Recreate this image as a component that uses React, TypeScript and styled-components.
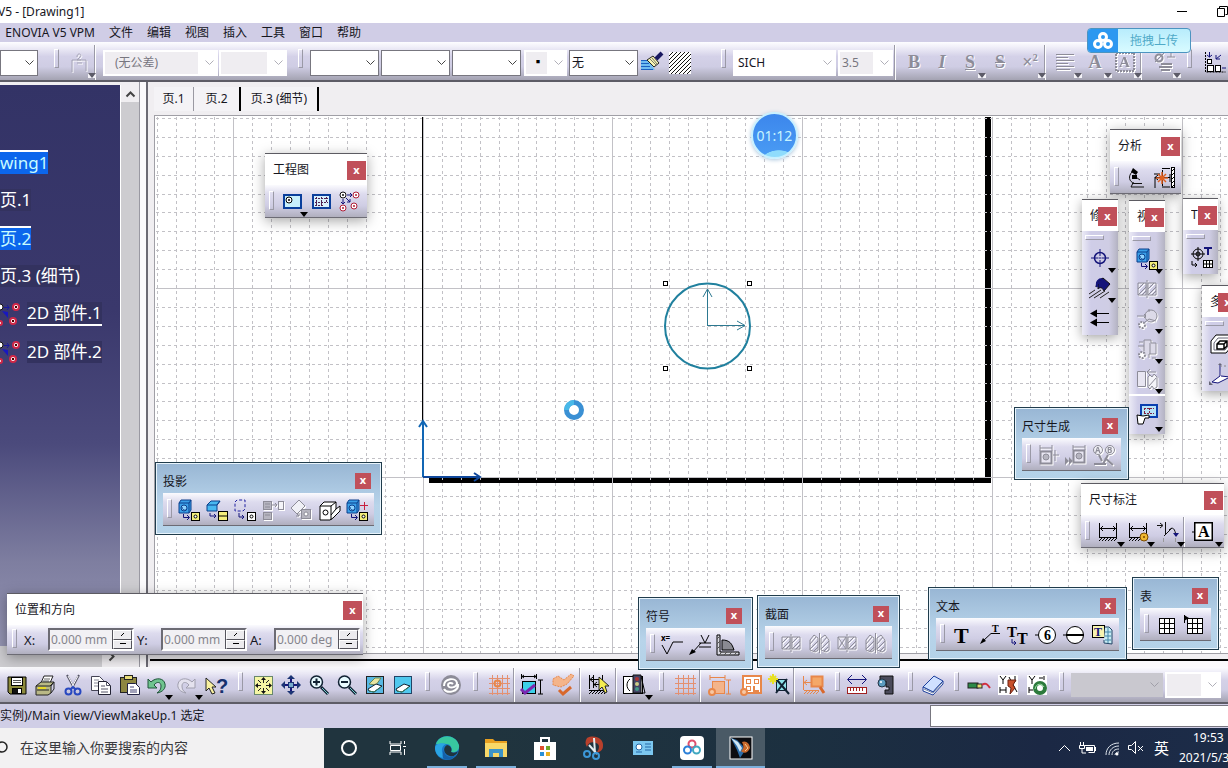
import React, { ReactNode } from "react";
import styled, { createGlobalStyle, css } from "styled-components";

const GlobalStyle = createGlobalStyle`
  * { box-sizing: border-box; }
  body {
    margin: 0;
    overflow: hidden;
    font-family: "Noto Sans", "Noto Sans CJK SC", sans-serif;
    font-size: 12px;
    line-height: 16px;
    color: #16161e;
  }
  button, input, select { font: inherit; color: inherit; }
`;

/* ---------- icon drawings ---------- */

const line = (d: string, stroke = "#000", width = 1, fill = "none") => (
  <path d={d} stroke={stroke} strokeWidth={width} fill={fill} />
);
const box = (x: number, y: number, w: number, h: number, fill = "#fff", stroke = "#000", sw = 1) => (
  <rect x={x} y={y} width={w} height={h} fill={fill} stroke={stroke} strokeWidth={sw} />
);
const ring = (x: number, y: number, color: string, fill = "#fff") => (
  <g>
    <circle cx={x} cy={y} r="3" fill={fill} stroke={color} />
    <circle cx={x} cy={y} r="1" fill={color} />
  </g>
);
const NAVY = "#14147a";
const GRAY = "#8d8c98";
const ORANGE = "#e8874a";

const blueCube = (
  <g>
    <path d="M1 4l2-3h10v10l-2 3H1z" fill="#3aa0e8" stroke="#0a3f8c" />
    <path d="M1 4h10v10M11 4l2-3" fill="none" stroke="#0a3f8c" />
    <circle cx="6" cy="9" r="3" fill="#8fd4ff" stroke="#0a3f8c" />
    <path d="M4 8a3 3 0 0 0 4 3" fill="none" stroke="#0a3f8c" />
  </g>
);
const yellowTarget = (
  <g>
    {line("M5.500 15v3.500H11M9 16l2.500 2.500L9 21", NAVY)}
    {box(13.5, 13.5, 8, 8, "#f4ee7c")}
    <circle cx="17.500" cy="17.500" r="1.500" fill="#fff" stroke="#000" />
  </g>
);
const hatchPair = (d: string) => (
  <g>
    {line("M2 5h8v12H2zM12 5h8v12h-8zM11 2v18", GRAY)}
    {line(d, GRAY)}
  </g>
);
const dim = (color: string) => (
  <g>{line("M2.500 2v14M19.500 2v14M3 7.500h16M6 5L3.500 7.500 6 10M16 5l2.500 2.500L16 10", color)}</g>
);
const hatchStrip = (color: string, w = 18) => (
  <g>
    {line(`M2 16.500h${w}`, color)}
    {Array.from({ length: Math.floor(w / 3) }, (_, i) => (
      <path key={i} d={`M${2 + i * 3} 20l3-3`} stroke={color} />
    ))}
  </g>
);
const gridLines = (color: string) =>
  line("M4.500 1v20M9.500 1v20M14.500 1v20M19.500 1v20M1 4.500h21M1 9.500h21M1 14.500h21M1 19.500h21", color);
const tablePic = (
  <g>
    {box(4.5, 4.5, 15, 15)}
    {line("M9.500 4v16M14.500 4v16M4 9.500h16M4 14.500h16")}
  </g>
);
const lens = (sign: string) => (
  <g>
    <path d="M13 13l7 7" stroke="#123" strokeWidth="3" />
    <path d="M14 14l6 6" stroke="#7cc" strokeWidth="1" />
    <circle cx="8.500" cy="8" r="6" fill="#e8fbff" stroke="#123" strokeWidth="1.500" />
    {line(sign, "#123", 2)}
  </g>
);
const eraser = (
  <g>
    <path d="M4 15l8-5 6 2-8 6-5-1z" fill="#fff" stroke="#123" />
    <path d="M5 17l5 1 7-5" fill="none" stroke="#3a8060" />
  </g>
);
const serif = (text: string, x: number, y: number, size: number, fill = "#000") => (
  <text x={x} y={y} fontFamily="Liberation Serif, serif" fontWeight="bold" fontSize={size} fill={fill}>
    {text}
  </text>
);

const ICONS: Record<string, ReactNode> = {
  save: (
    <g>
      <path d="M2 3h18v17H4l-2-2z" fill="#8c8a3c" stroke="#000" />
      {box(5.5, 3.5, 11, 8, "#fff")}
      {line("M7 6.500h8M7 8.500h8", "#555")}
      {box(6.5, 14.5, 9, 5, "#111")}
      <rect x="12" y="15" width="3" height="4" fill="#fff" />
    </g>
  ),
  print: (
    <g>
      <path d="M7 9l3-7h9l-3 7z" fill="#fff" stroke="#222" />
      {line("M10 5h6M9 7h6", "#666")}
      <path d="M2 12l5-4h13l-3 4v7l-3 2H2z" fill="#b9b886" stroke="#222" />
      {line("M2 12h14l4-4v7l-3 4M3 16h12", "#222")}
      <path d="M4 14h8" stroke="#e8d828" strokeWidth="2" />
    </g>
  ),
  cut: (
    <g>
      {line("M5 1l7 13M17 1l-7 13", "#556", 2)}
      {line("M6 2l6 11M16 2l-6 11", "#fff")}
      <circle cx="6.500" cy="17.500" r="3" fill="none" stroke="#2848c0" strokeWidth="2" />
      <circle cx="15.500" cy="17.500" r="3" fill="none" stroke="#2848c0" strokeWidth="2" />
      {line("M9 15l2-2 3 3", "#2848c0", 2)}
    </g>
  ),
  copy: (
    <g>
      <path d="M1.500 2.500h8l4 4v10h-12z" fill="#fff" stroke="#445" />
      {line("M4 6h5M4 9h6M4 12h6", "#889")}
      <path d="M8.500 7.500h8l4 4v9h-12z" fill="#fff" stroke="#223" />
      {line("M16.500 7.500v4h4M11 12h4M11 15h7M11 18h7", "#556")}
    </g>
  ),
  paste: (
    <g>
      {box(2.5, 3.5, 16, 15, "#8d8640", "#222")}
      {box(6.5, 1.5, 8, 4, "#e9dd7a", "#222")}
      <path d="M9.500 9.500h8l4 4v7h-12z" fill="#fff" stroke="#224" />
      {line("M12 13h4M12 16h7M12 18h7", "#447")}
    </g>
  ),
  undo: (
    <path d="M2 5v9h9l-3-3c3-4 7-3 7 1 0 3-1 5-4 7 6-1 9-5 8-9C18 4 10 3 5 8z" fill="#6fc48f" stroke="#20543a" />
  ),
  redo: (
    <path d="M20 5v9h-9l3-3c-3-4-7-3-7 1 0 3 1 5 4 7-6-1-9-5-8-9C4 4 12 3 17 8z" fill="#e4e2ee" stroke="#a09fae" />
  ),
  help: (
    <g>
      <path d="M1 4v13l3-3 3 6 3-1-3-6h4z" fill="#f8f0a0" stroke="#222" />
      <text x="11" y="19" fontFamily="Liberation Sans, sans-serif" fontWeight="bold" fontSize="20" fill="#16306e">
        ?
      </text>
    </g>
  ),
  fit: (
    <g>
      {box(2.5, 2.5, 18, 18, "#f6f6a4", "#68886c")}
      {line("M11.500 4v5M11.500 14v5M4 11.500h5M14 11.500h5M6 6l3 3M17 6l-3 3M6 17l3-3M17 17l-3-3", "#222")}
      <path d="M9 6l2.500-3L14 6zM9 17l2.500 3 2.500-3zM6 9l-3 2.500L6 14zM17 9l3 2.500L17 14z" fill="#111" />
    </g>
  ),
  pan: (
    <g>
      {line("M11 3v16M3 11h16", NAVY, 2)}
      <path d="M7 5l4-4 4 4zM7 17l4 4 4-4zM5 7l-4 4 4 4zM17 7l4 4-4 4z" fill="#1c3474" />
      {box(8.5, 8.5, 5, 5, "#7ac", "#1c3474")}
    </g>
  ),
  zoomin: lens("M5 8h7M8.500 4.500v7"),
  zoomout: lens("M5 8h7"),
  viewA: (
    <g>
      {box(2.5, 2.5, 17, 17, "#58b8e4", "#222")}
      <path d="M5 10l6-6h6l-5 7z" fill="#e8e6a0" stroke="#685" />
      {eraser}
    </g>
  ),
  viewB: (
    <g>
      {box(2.5, 2.5, 17, 17, "#50c8ee", "#246")}
      {eraser}
    </g>
  ),
  swirl: (
    <g>
      <circle cx="11" cy="11" r="10" fill={GRAY} />
      {line("M4 12c0-8 12-9 13-3 0 5-9 6-9 2 0-2 3-3 5-1M18 10c1 8-11 10-14 5", "#fff", 2)}
    </g>
  ),
  ogrid: (
    <g>
      {gridLines("#e49070")}
      <circle cx="9.500" cy="9.500" r="3" fill="none" stroke={ORANGE} strokeWidth="2" />
    </g>
  ),
  ogrid2: gridLines("#e49070"),
  dimcheck: (
    <g>
      {line("M2 2.500h14M1.500 0v5M16.500 0v5M20.500 6v14M18 6h5M18 20h5M4 1L2 2.500 4 4M14 1l2 1.500L14 4")}
      {box(2.5, 7.5, 13, 12, "#3cd0e8")}
      <path d="M1 15l4 4 10-8" fill="none" stroke="#7a28b0" strokeWidth="3" />
    </g>
  ),
  ocheck: (
    <g>
      <path d="M1 5l5-3 6 4 7-6 3 2-7 8-6 3-8-2z" fill="#f4b48a" stroke={ORANGE} strokeDasharray="2 1" />
      <path d="M7 16l4 4 8-7" fill="none" stroke="#d8682c" strokeWidth="3" />
    </g>
  ),
  dimcursor: (
    <g>
      {line("M2.500 1v14M6.500 1v13M15.500 1v5M3 5.500h11M6 10.500h8M6 3L3 5.500 6 8M10 8l-3 2.500L10 13")}
      {hatchStrip("#000")}
      <path d="M12 3v13l3-3 3 6 2-1-2-6h4z" fill="#f4ec50" stroke="#222" />
    </g>
  ),
  traffic: (
    <g>
      {box(0.5, 2.5, 19, 17)}
      {line("M7 5c-4 3-4 9 0 12M18 2l4 17h-4")}
      <path d="M10 1h8v18h-8z" fill="#446" stroke="#111" />
      <circle cx="14" cy="5" r="2" fill="#a33" />
      <circle cx="14" cy="10" r="2" fill="#cc8" />
      <circle cx="14" cy="15" r="2" fill="#498" />
    </g>
  ),
  odim: (
    <g>
      {box(4.5, 7.5, 12, 12, "#f4b48a", ORANGE)}
      {line("M2 3.500h15M2 1v5M17 1v5M20.500 6v14M18 6h5M18 20h5", ORANGE)}
      <circle cx="4" cy="18" r="3" fill="#f7c8a4" stroke={ORANGE} strokeWidth="2" />
    </g>
  ),
  owin: (
    <g>
      {box(3, 2, 18, 17, "#fff", ORANGE, 2)}
      {box(6.5, 5.5, 4, 4, "#fff", ORANGE)}
      {box(14.5, 5.5, 4, 4, "#fff", ORANGE)}
      {box(6.5, 12.5, 4, 4, "#fff", ORANGE)}
      {line("M14 12v5h5", ORANGE, 2)}
      <circle cx="4" cy="18" r="3" fill="#f7c8a4" stroke={ORANGE} strokeWidth="2" />
    </g>
  ),
  wand: (
    <g>
      {box(8.5, 5.5, 10, 11, "#8fe4ec", "#123")}
      {line("M9 6l12 14M19 5L8 19", "#123", 2)}
      <path d="M5 0v10M0 5h10M2 2l6 6M8 2L2 8" stroke="#e8e020" strokeWidth="2" />
    </g>
  ),
  odimzoom: (
    <g>
      {line("M1.500 2v14M2 8.500h14M5 6L2 8.500 5 11", ORANGE)}
      {box(9.5, 2.5, 11, 10, "#f4a868", ORANGE, 2)}
      {line("M18 13l4 6", "#d8682c", 3)}
      {hatchStrip(ORANGE, 15)}
    </g>
  ),
  ruler: (
    <g>
      {line("M2 5.500h18M6 1L1.500 5.500 6 10M16 1l4.500 4.500L16 10", NAVY)}
      {box(1.5, 13.5, 19, 6, "#fff", "#a02020")}
      {line("M4.500 14v3M7.500 14v3M10.500 14v3M13.500 14v3M16.500 14v3", "#a02020")}
    </g>
  ),
  caliper: (
    <g>
      <path d="M5 2h13v18h-8v-4h4v-3h-3V7H5z" fill="#4a4a5a" stroke="#111" />
      <circle cx="7" cy="9" r="4" fill="#5c9cc0" stroke="#234" />
      <circle cx="6" cy="8" r="1" fill="#fff" />
    </g>
  ),
  book: (
    <g>
      <path d="M1 13L12 2l9 5-10 11z" fill="#cfe0ff" stroke="#1c3f9c" />
      <path d="M1 13v4l10 4 10-11V7L11 18z" fill="#fff" stroke="#1c3f9c" />
      {line("M2 15l9 4L20 9", "#78a")}
    </g>
  ),
  plug: (
    <g>
      <rect x="0" y="9" width="10" height="5" fill="#2c8a48" stroke="#222" />
      <rect x="9" y="10" width="5" height="4" fill="#e4e070" stroke="#222" />
      {line("M14 11c4-3 6 0 8 3", "#d03040", 2)}
    </g>
  ),
  knowA: (
    <g>
      <rect x="1" y="1" width="20" height="20" fill="#fff" />
      {line("M3 2l3 4 3-4M6 6v4M3 19v-6M9 19v-6M3 16h6M12 3l8 15M18 2v6")}
      <path d="M11 6h8l-3 5 2 3-5 6 1-6-3-2z" fill="#c8502c" stroke="#6a2010" />
    </g>
  ),
  knowB: (
    <g>
      <rect x="1" y="1" width="20" height="20" fill="#fff" />
      {line("M3 2l3 4 3-4M6 6v4M13 4h4M3 19v-6M18 2v4M3 16h4")}
      <circle cx="14" cy="14" r="5" fill="none" stroke="#2c7a3c" strokeWidth="4" />
      {line("M9 15c1-6 7-6 9-2", "#9fe0a8", 1)}
    </g>
  ),
  frame: (
    <g>
      {box(3, 4, 17, 13, "#c8f0fc", "#0a3f9c", 2)}
      {ring(8, 9, "#000")}
    </g>
  ),
  sheet: (
    <g>
      {box(3, 4, 17, 13, "#d8f0fc", "#0a3f9c", 2)}
      <path d="M5 7.500h13M5 11.500h13M5 14.500h8M6.500 6v9M11.500 6v9M16.500 6v6" fill="none" stroke="#502050" strokeDasharray="2 1" />
    </g>
  ),
  detail: (
    <g>
      {ring(4, 4, "#111")}
      {ring(17, 4, "#b02038")}
      {ring(4, 17, "#b02038")}
      {ring(15, 15, "#b02038")}
      {line("M8 4h5M11 2l2 2-2 2M4 8v5M2 11l2 2 2-2M7 7l4 4M11 8v3H8", NAVY)}
    </g>
  ),
  treeDetail: (
    <g>
      <g stroke="#d02848" strokeWidth="2" fill="#fff">
        <circle cx="16" cy="4" r="3" />
        <circle cx="13" cy="18" r="3" />
        <circle cx="0" cy="20" r="2" />
      </g>
      {line("M15 4h2M12 18h2", "#400", 2)}
      <circle cx="0" cy="4" r="3" fill="#fff" stroke="#111" />
      {line("M4 4.500h5M7 2l2 2.500L7 7", "#1818a0")}
      <path d="M2 8l6 1v6z" fill="#1818c0" />
    </g>
  ),
  projview: (
    <g>
      {blueCube}
      {yellowTarget}
    </g>
  ),
  projplus: (
    <g>
      {blueCube}
      {yellowTarget}
      {line("M18.500 3v8M14 6.500h8", "#c82040")}
    </g>
  ),
  section: (
    <g>
      <path d="M1 6l4-4h9l-3 4v6H1z" fill="#48b8f0" stroke="#0a3f8c" />
      {line("M1 6h10l3-4", "#0a3f8c")}
      {line("M4 14v3h6M8 15l2 2-2 2", NAVY)}
      {box(12.5, 12.5, 9, 9, "#f4ee7c")}
      {line("M13 17h9")}
    </g>
  ),
  dashed: (
    <g>
      <path d="M1 3l2-2h8v9l-2 2H1z" fill="none" stroke="#2020a0" strokeDasharray="3 2" />
      {line("M5 14v4h5M8 16l2 2-2 2", NAVY)}
      {box(13.5, 13.5, 8, 8)}
      <circle cx="17.500" cy="17.500" r="1.500" fill="#fff" stroke="#000" />
    </g>
  ),
  grayProj: (
    <g>
      {box(1.5, 2.5, 8, 8, "#b6b5c0", GRAY)}
      {box(1.5, 13.5, 8, 7, "#b6b5c0", GRAY)}
      {box(16.5, 2.5, 5, 8, "#f4f4f8", GRAY)}
      {line("M10 6h5M13 4l2 2-2 2M3 5h5M3 8h5M3 16h5", GRAY)}
    </g>
  ),
  grayAux: (
    <g>
      <path d="M1 9l8-8 6 6-8 8z" fill="#f0f0f6" stroke={GRAY} />
      {line("M6 14l3 3M9 14v3H6", GRAY)}
      {box(11.5, 10.5, 9, 9, "#b6b5c0", GRAY)}
      <circle cx="16" cy="15" r="2" fill="#fff" stroke={GRAY} />
    </g>
  ),
  iso: (
    <g>
      <path d="M2 7l4-4h12v7l4-3v5l-7 7-3 2H2z" fill="#fff" stroke="#000" />
      {line("M2 7h11v14M13 7l5-4M18 10l-5 6")}
      <circle cx="7.500" cy="13.500" r="2.500" fill="#fff" stroke="#000" />
    </g>
  ),
  scope: (
    <g>
      <path d="M8 1l5 4-2 3-5-3z" fill="#000" />
      {line("M7 5c-4 4-3 10 2 11M8 8l7 5M7 16.500h10M8 16l-2 4h13", "#111")}
      {box(7.5, 8.5, 4, 3, "#000")}
    </g>
  ),
  analysis: (
    <g>
      {line("M1 7h6M3 10.500h14M5 8l-3 2.500L5 13M2 10v11M9.500 3v16M9 1.500h8M9 20h8M17 7v8")}
      <path d="M9 5v12M3 11h12M5 7l8 8M13 7l-8 8" stroke="#e06020" strokeWidth="1.500" />
      {box(18.5, 0.5, 3, 20)}
      {line("M18 5l4-4M18 9l4-4M18 13l4-4M18 17l4-4M18 21l4-4")}
    </g>
  ),
  target: (
    <g>
      <circle cx="11" cy="11" r="5.500" fill="none" stroke={NAVY} strokeWidth="1.500" />
      {line("M11 2v7M11 13v7M2 11h7M13 11h7M9.500 11h3", NAVY)}
    </g>
  ),
  bucket: (
    <g>
      <path d="M8 5l6-4 7 6-6 7c-2-4-4-4-6-2v-5l-2 3z" fill="#14147a" stroke="#111" />
      {line("M8 10c-1-6 2-8 5-8", NAVY, 2)}
      {line("M0 17l6-4M0 21l12-8M5 21l11-7M11 21l9-6", "#222")}
    </g>
  ),
  arrows: (
    <g>
      {line("M3 6.500h17M3 15.500h17")}
      <path d="M1 6.500l7-4v8zM1 15.500l7-4v8z" fill="#000" />
    </g>
  ),
  hatchA: hatchPair("M2 11l6-6M2 17L10 9M6 17l4-4M12 11l6-6M12 17l8-8M16 17l4-4"),
  hatchB: (
    <g>
      {line("M2 18V8l4-5 4 3v12l-3 2zM13 18V6l4-3 4 5v10l-3 2zM11.500 1v20", GRAY)}
      {line("M2 12l6-7M2 17l8-8M6 19l4-4M13 12l6-7M13 17l8-8M16 19l4-4", GRAY)}
    </g>
  ),
  hatchC: hatchPair("M2 5l8 12M10 5L2 17M12 11l6-6M12 17l8-8M16 17l4-4"),
  grayGlass: (
    <g>
      <circle cx="15" cy="8" r="6" fill="#dcdae8" stroke={GRAY} />
      {line("M1 8h9M8 6l2 2-2 2M13 1v3M9 14l4-3 7 2", GRAY)}
      <circle cx="6" cy="17" r="3" fill="#fff" stroke={GRAY} strokeWidth="2" strokeDasharray="2 1" />
    </g>
  ),
  grayBreak: (
    <g>
      <path d="M2 8h6V2h7v3h5v11h-7v4" fill="#dcdae8" stroke={GRAY} />
      {line("M8 8v5M14 5v11M3 4h4M16 20h4", GRAY)}
      <circle cx="6" cy="17" r="3" fill="#fff" stroke={GRAY} strokeWidth="2" strokeDasharray="2 1" />
    </g>
  ),
  grayCut: (
    <g>
      <path d="M1.500 3.500h8v15h-8z" fill="#e8e6f2" stroke={GRAY} />
      <path d="M12 9l2-2 2 2 2-3 3 3v10l-3 2-2-3-2 3-2-2z" fill="#f4f4f8" stroke={GRAY} />
      {line("M12 4h8M14 1l-3 3 3 3M13 18l7-8", GRAY)}
    </g>
  ),
  handSheet: (
    <g>
      {box(5, 2, 16, 12, "#b8e4f8", "#0a3fb0", 2)}
      <path d="M8 5.500h10M8 10.500h10M8.500 5v6M13.500 5v6" stroke="#802040" strokeDasharray="2 1" />
      <path d="M1 12l6 1 6-1v3h-4l-1 3-1 3H2z" fill="#fff" stroke="#000" />
    </g>
  ),
  textTarget: (
    <g>
      <circle cx="8" cy="8" r="5" fill="none" stroke="#000" />
      <circle cx="8" cy="8" r="2" fill="none" stroke="#000" />
      {line("M8 1v14M1 8h14M2 15v4h5M5 17l2 2-2 2")}
      {line("M14 2h8M18 2v7", NAVY, 2)}
      {box(13.5, 14.5, 9, 7)}
      {line("M16.500 14v8M19.500 14v8M13 18h10")}
    </g>
  ),
  nested: (
    <g>
      <path d="M2 8l5-6h15v12l-5 6H2z" fill="#fff" stroke="#000" />
      <path d="M5 10l4-5h11v7l-4 5H5z" fill="none" stroke="#667" />
      <path d="M8 11l3-3h7v5l-3 3H8zM8 11h7v5M15 11l3-3" fill="#fff" stroke="#000" strokeWidth="1.500" />
    </g>
  ),
  axes: (
    <g>
      <path d="M11 2v11l-8 6 6 1 12-6-9-1" fill="#fff" stroke={NAVY} />
      <path d="M11 3h9v9" fill="none" stroke="#888" strokeDasharray="2 2" />
      <path d="M0 18l4 4H0zM9 2l2-2 2 2z" fill="#667" />
    </g>
  ),
  grayDimA: (
    <g>
      {line("M3 4h12M3 1v6M15 1v6M18 6v11M16 11h6", GRAY)}
      {box(3.5, 7.5, 11, 12, "#e8e6f2", GRAY, 2)}
      <circle cx="9" cy="13" r="3" fill="#b6b5c0" stroke={GRAY} />
    </g>
  ),
  grayDimB: (
    <g>
      {line("M8 3h12M8 1v5M20 1v5", GRAY)}
      {box(8.5, 6.5, 11, 12, "#e8e6f2", GRAY, 2)}
      <circle cx="14" cy="12" r="3" fill="#b6b5c0" stroke={GRAY} />
      <path d="M0 13l4 4-4 4zM4 13l4 4-4 4z" fill={GRAY} />
    </g>
  ),
  grayAB: (
    <g>
      <circle cx="5" cy="6" r="4.500" fill="#f0f0f6" stroke={GRAY} />
      <circle cx="17" cy="6" r="4.500" fill="#f0f0f6" stroke={GRAY} />
      <text x="2" y="9" fontSize="8" fill={GRAY} fontWeight="bold">A</text>
      <text x="14" y="9" fontSize="8" fill={GRAY} fontWeight="bold">B</text>
      {line("M6 11l3 6M15 11l-5 9M12 14l8 7", GRAY, 2)}
      {line("M1 20h12", GRAY, 2)}
    </g>
  ),
  dimension: (
    <g>
      {dim("#000")}
      {hatchStrip("#000")}
    </g>
  ),
  dimensionGear: (
    <g>
      {dim("#000")}
      {hatchStrip("#000", 12)}
      <circle cx="17" cy="16" r="4" fill="#f0b830" stroke="#7a4a00" />
      <circle cx="17" cy="16" r="1" fill="#7a4a00" />
    </g>
  ),
  dimensionCurve: (
    <g>
      {line("M0 4.500h5M3 2l3 2.500L3 7M8.500 1v12M7 15l8-8M12 9c4-4 6-1 7 6", "#111")}
      <path d="M16 12h6l-3 4z" fill={NAVY} />
      {line("M6.500 17v4M18.500 17v4", "#999")}
    </g>
  ),
  datum: (
    <g>
      {box(3, 2, 17, 17, "#fff", "#000", 1)}
      {box(2.5, 1.5, 18, 18, "none")}
      {serif("A", 6, 16, 16)}
      {line("M0 11h2")}
    </g>
  ),
  roughness: (
    <g>
      {line("M1 11l5 9 6-12h10")}
      <text x="0" y="7" fontSize="8" fontWeight="bold">x=</text>
    </g>
  ),
  weld: (
    <g>
      {line("M10 9h12M10 13h12M12 1l4 8 4-8M12 9L3 19")}
      <path d="M0 21l3-6 4 3z" fill="#000" />
    </g>
  ),
  areaFill: (
    <g>
      <path d="M3 1v17h19v3H0V1z" fill="#d8d8e0" stroke="#000" />
      {line("M0 5l3-3M0 10l3-3M0 15l3-3M2 21l3-3M7 21l3-3M12 21l3-3M17 21l3-3", "#555")}
      <path d="M5 16V6c8 0 10 4 12 10z" fill="#8a8a92" stroke="#000" />
    </g>
  ),
  textT: serif("T", 3, 19, 22),
  textLeader: (
    <g>
      {serif("T", 13, 8, 10)}
      {line("M21 9.500h-9L4 17")}
      <path d="M1 20l3-6 3 3z" fill="#000" />
    </g>
  ),
  textReplicate: (
    <g>
      {serif("T", 0, 13, 15)}
      {serif("T", 10, 20, 16)}
      {line("M5 15v4h4M7 17l2 2-2 2", NAVY)}
    </g>
  ),
  balloon: (
    <g>
      <circle cx="12" cy="11" r="8.500" fill="#fff" stroke="#000" />
      {serif("6", 9, 16, 14)}
      {line("M0 11h3")}
    </g>
  ),
  datumTarget: (
    <g>
      <circle cx="12" cy="11" r="8.500" fill="#fff" stroke="#000" />
      {line("M3 11h18", "#000", 2)}
      {line("M0 11h3")}
    </g>
  ),
  textLink: (
    <g>
      {box(1.5, 1.5, 12, 12, "#f8f4b0")}
      {serif("T", 3, 12, 12, NAVY)}
      <path d="M14 3h4l3 3v14l-8-1v-3" fill="#c8ecf4" stroke="#246" />
      {line("M14 8h6M14 12h6M14 16h6M17 4v15", "#48a")}
    </g>
  ),
  table: tablePic,
  tableCsv: (
    <g>
      {tablePic}
      <path d="M1 1l5 3-5 3z" fill="#000" />
      {line("M1.500 1v8")}
    </g>
  ),
  grayTolerance: (
    <g>
      {line("M3 20V8h14v11M8 11h5", "#a4a3b4")}
      {line("M8 5c0-5 6-3 3 0l-3 3h4", "#a4a3b4")}
    </g>
  ),
  brush: (
    <g>
      <path d="M0 9h8l6 9H0z" fill="#70bcf0" />
      {line("M0 8.500h9M0 11.500h8M0 14.500h9M0 17.500h12", "#1c60c0")}
      <path d="M6 8l6-4 6 7-5 4z" fill="#f8f4b4" stroke="#222" />
      {line("M9 7l6 6M11 6l5 6", "#776")}
      {line("M15 7l6-6", "#181860", 4)}
    </g>
  ),
  hatchTile: (
    <g>
      <rect width="22" height="22" fill="#fff" />
      {line("M0 4l4-4M0 8l8-8M0 12L12 0M0 16L16 0M0 20L20 0M2 22L22 2M6 22L22 6M10 22l12-12M14 22l8-8M18 22l4-4", "#111")}
    </g>
  ),
  grayAlign: line("M1 2.500h18M1 5.500h12M1 8.500h18M1 11.500h12M1 14.500h18M1 17.500h14", GRAY),
  grayFrame: (
    <g>
      <rect x="2" y="1" width="18" height="18" fill="none" stroke={GRAY} strokeWidth="2" strokeDasharray="2 1" />
      {serif("A", 5, 15, 15, GRAY)}
    </g>
  ),
  graySymbol: (
    <g>
      <circle cx="5" cy="6" r="3.500" fill="none" stroke={GRAY} strokeWidth="2" />
      {line("M1 10l9-9M13 5h8M17 1v4", GRAY)}
      {line("M7 12h11M5 15h13M7 18h9", GRAY, 2)}
    </g>
  ),
  snapGrid: (
    <g>
      <path d="M1.500 0v20h20" fill="none" stroke="#000" strokeDasharray="2 1" />
      {box(3.5, 7.5, 4, 4)}
      {box(3.5, 13.5, 6, 6)}
      {box(11.5, 13.5, 5, 6)}
      {line("M5.500 0v5M3 3l2.500 2L8 3M17 3l-5 4M12 3v4h4M22 16h-4", NAVY)}
    </g>
  ),
};

/* ---------- shared parts ---------- */

const Shell = styled.div`
  position: relative;
  display: flex;
  flex-direction: column;
  height: 100vh;
  overflow: hidden;
  background: #f0eef1;
`;

const Drawing = styled.svg<{ $embossed?: boolean }>`
  display: block;
  flex: none;
  overflow: visible;
  filter: ${(p) => (p.$embossed ? "drop-shadow(1px 1px 0 #fff)" : "none")};
`;

const Icon = ({ name }: { name: string }) => (
  <Drawing width="22" height="22" viewBox="0 0 22 22" aria-hidden="true" $embossed={/^(gray|hatch[ABC])/.test(name)}>
    {ICONS[name]}
  </Drawing>
);

const ToolButton = styled.button<{ $w?: number; $gray?: boolean; $h?: number }>`
  position: relative;
  display: flex;
  align-items: center;
  justify-content: center;
  flex: none;
  width: ${(p) => p.$w ?? 28}px;
  height: ${(p) => p.$h ?? 30}px;
  padding: 0;
  border: 0;
  background: none;
  ${(p) => p.$gray && css`
    color: #8d8c98;
    text-shadow: 1px 1px 0 #fff;
    font: bold 18px "Liberation Serif", serif;
  `}
`;

const Caret = styled.i<{ $boxed?: boolean }>`
  position: absolute;
  right: -2px;
  bottom: 0;
  border: 4px solid transparent;
  border-top: 5px solid #000;
  border-bottom: 0;
  ${(p) => p.$boxed && css`border-color: #5c5b68 #f4f3f8 #f4f3f8;`}
`;

const Grip = styled.span<{ $w?: number; $across?: boolean }>`
  flex: none;
  display: flex;
  justify-content: center;
  align-self: flex-start;
  width: ${(p) => p.$w ?? 20}px;
  padding: 4px 0 ${(p) => (p.$across ? 3 : 0)}px;
  &::before {
    content: "";
    width: ${(p) => (p.$across ? 17 : 3)}px;
    height: ${(p) => (p.$across ? 3 : 17)}px;
    border: 1px solid #fff;
    border-right-color: #9a99a6;
    border-bottom-color: #9a99a6;
  }
`;

const Divider = styled.span<{ $across?: boolean }>`
  flex: none;
  align-self: stretch;
  width: ${(p) => (p.$across ? "auto" : "2px")};
  height: ${(p) => (p.$across ? "2px" : "auto")};
  background: #fff;
  border-left: ${(p) => (p.$across ? "0" : "1px solid #9a99a6")};
`;

type ToolSpec = string | { icon: string; w?: number; caret?: boolean; h?: number } | { grip: number };

const Tool = ({ spec, w }: { spec: ToolSpec; w?: number }) => {
  if (spec === "|") return <Divider />;
  if (spec === "-") return <Divider $across />;
  if (typeof spec === "object" && "grip" in spec) return <Grip $w={spec.grip} />;
  const s = typeof spec === "string" ? { icon: spec } : spec;
  return (
    <ToolButton type="button" aria-label={s.icon} $w={("w" in s && s.w) || w} $h={"h" in s ? s.h : undefined}>
      <Icon name={s.icon} />
      {"caret" in s && s.caret && <Caret />}
    </ToolButton>
  );
};

/* ---------- title and menu ---------- */

const TitleBar = styled.header`
  display: flex;
  align-items: center;
  flex: none;
  height: 23px;
  background: #fff;
  white-space: nowrap;
`;
const TitleText = styled.span`
  margin-left: -2px;
`;
const WindowButtons = styled.div`
  display: flex;
  margin-left: auto;
`;
const WindowButton = styled.button<{ $w: number }>`
  display: flex;
  align-items: center;
  padding: 0 0 0 18px;
  width: ${(p) => p.$w}px;
  height: 22px;
  border: 0;
  background: none;
  overflow: hidden;
`;
const MenuBar = styled.nav`
  display: flex;
  align-items: center;
  flex: none;
  gap: 14px;
  height: 19px;
  background: #d0cde6;
`;
const MenuButton = styled.button<{ $lead?: boolean }>`
  flex: none;
  width: ${(p) => (p.$lead ? "95px" : "auto")};
  padding: 0;
  border: 0;
  background: none;
  white-space: nowrap;
  text-align: right;
`;
const UploadPill = styled.button`
  position: absolute;
  z-index: 5;
  top: 28px;
  right: 37px;
  display: flex;
  align-items: center;
  width: 104px;
  height: 25px;
  padding: 0;
  border: 1px solid #4c94c0;
  border-radius: 4px;
  background: linear-gradient(#b8ecfc, #d8fbff);
  color: #50aac8;
  overflow: hidden;
`;
const PillLogo = styled.span`
  display: flex;
  align-items: center;
  justify-content: center;
  width: 30px;
  height: 100%;
  margin-right: 12px;
  background: #2c98f0;
`;
const CloudRings = () => (
  <Drawing width="20" height="20" viewBox="0 0 20 20">
    <g fill="none" strokeWidth="3" stroke="#fff">
      <circle cx="10" cy="6" r="3.500" />
      <circle cx="5" cy="13" r="3.500" />
      <circle cx="15" cy="13" r="3.500" />
    </g>
  </Drawing>
);

/* ---------- toolbars ---------- */

const ToolStrip = styled.div<{ $h: number; $pad?: number }>`
  display: flex;
  align-items: center;
  flex: none;
  height: ${(p) => p.$h}px;
  padding-top: ${(p) => p.$pad ?? 0}px;
  overflow: hidden;
  background: linear-gradient(#fdfdff 0, #f1f0f9 12%, #d4d1e8 38%, #cfcde4 65%, #a4a3b2 100%);
  border-bottom: 2px solid #5d5c66;
`;
const ComboBox = styled.span<{ $w: number; $ml?: number }>`
  display: grid;
  align-items: center;
  flex: none;
  width: ${(p) => p.$w}px;
  height: 26px;
  margin-left: ${(p) => p.$ml ?? 2}px;
  & > * { grid-area: 1 / 1; }
  & > svg { justify-self: end; margin-right: 4px; pointer-events: none; }
`;
const ComboSelect = styled.select<{ $muted?: boolean; $flat?: boolean; $pad?: number }>`
  appearance: none;
  width: 100%;
  height: 100%;
  padding: 0 ${(p) => p.$pad ?? 2}px;
  border: 1px solid #77767f;
  border-radius: 0;
  background: #fff;
  opacity: 1;
  ${(p) => p.$muted && css`
    border: 2px solid #fff;
    background: linear-gradient(#efedf1, #efedf1) left / calc(100% - 18px) 100% no-repeat #fff;
    color: #77767f;
  `}
  ${(p) => p.$flat && css`
    border-color: #fff;
  `}
`;
type ComboProps = { w: number; ml?: number; pad?: number; label: string; value?: string; muted?: boolean; flat?: boolean };
const Combo = ({ w, ml, pad, label, value = "", muted, flat }: ComboProps) => (
  <ComboBox $w={w} $ml={ml}>
    <ComboSelect aria-label={label} $muted={muted} $flat={flat} $pad={pad} disabled={muted} defaultValue={value}>
      <option>{value}</option>
    </ComboSelect>
    <Drawing width="9" height="6" viewBox="0 0 9 6">
      {line("M0.500 0.500l4 4 4-4", muted || flat ? "#b0afb8" : "#444")}
    </Drawing>
  </ComboBox>
);
const PointSelect = styled(ComboSelect)`
  color: #000;
`;
const GrayCombo = styled.select`
  appearance: none;
  width: 100%;
  height: 24px;
  border: 0;
  border-radius: 0;
  background: #c9c8cf;
  opacity: 1;
`;
const Space = styled.span<{ $w: number }>`
  flex: none;
  width: ${(p) => p.$w}px;
`;
const Emphasis = styled.span<{ $kind: "i" | "u" | "s" | "n" }>`
  font-style: ${(p) => (p.$kind === "i" ? "italic" : "normal")};
  text-decoration: ${(p) => (p.$kind === "u" ? "underline" : p.$kind === "s" ? "line-through" : "none")};
`;
const Power = styled.sup`
  font-size: 10px;
  margin-top: -10px;
`;

/* ---------- main area ---------- */

const Main = styled.main`
  display: flex;
  flex: 1;
  min-height: 0;
`;
const TreePane = styled.aside`
  display: grid;
  grid-template: 1fr 21px / 121px 18px;
  flex: none;
  width: 140px;
  padding-top: 3px;
  border-right: 1px solid #9a99a2;
`;
const Tree = styled.ul`
  margin: 0;
  padding: 58px 0 0;
  list-style: none;
  overflow: hidden;
  border-right: 1px solid #fff;
  background: linear-gradient(#333366 0, #3a386c 40%, #4b4a7c 64%, #7e7ea0 85%, #9494b2 100%);
`;
const TreeRow = styled.li`
  display: flex;
  align-items: center;
  gap: 5px;
  height: 38px;
  font-size: 17px;
  line-height: 22px;
  color: #fff;
  white-space: nowrap;
`;
const TreeLabel = styled.span<{ $on?: boolean; $line?: boolean }>`
  background: ${(p) => (p.$on ? "#0c66ec" : "#33325f")};
  color: ${(p) => (p.$on ? "#c8fbff" : "#fff")};
  border-top: ${(p) => (p.$on ? "2px solid #fff" : "0")};
  border-bottom: ${(p) => (p.$line ? "2px solid #fff" : "0")};
`;
const ScrollTrack = styled.div`
  display: flex;
  justify-content: center;
  background: linear-gradient(#f0eef1 17px, #cdccd0 17px);
  padding-top: 6px;
`;
const ScrollBottom = styled.div`
  grid-column: 1 / 3;
  display: flex;
  align-items: center;
  justify-content: flex-end;
  padding-right: 24px;
  background: linear-gradient(90deg, #cdccd0 102px, #f0eef1 102px);
`;
const Splitter = styled.div`
  flex: none;
  width: 8px;
  background: #fbfafc;
  border-right: 2px solid #6c6b74;
`;
const Work = styled.section`
  display: flex;
  flex: 1;
  flex-direction: column;
  min-width: 0;
  padding-left: 6px;
`;
const Tabs = styled.div`
  display: flex;
  align-items: center;
  flex: none;
  height: 33px;
`;
const Tab = styled.button<{ $w: number; $dark?: boolean }>`
  width: ${(p) => p.$w}px;
  height: 24px;
  padding: 0;
  border: 0;
  border-right: ${(p) => (p.$dark ? "2px solid #000" : "1px solid #9a99a2")};
  background: #f4f3f6;
  white-space: nowrap;
`;
const Sheet = styled.div`
  flex: 1;
  min-height: 0;
  border: 1px solid #a09fa6;
  border-right: 0;
  background: #fff;
  overflow: hidden;
`;
const SheetFoot = styled.div`
  flex: none;
  height: 13px;
  margin-left: -4px;
  background: linear-gradient(#f0eef1 5px, #000 5px, #000 7px, #fbfafc 7px);
`;

const steps = (from: number, n: number, size: number) =>
  Array.from({ length: n }, (_, i) => ({ at: Math.round(from + i * size), major: i % 10 === 0 }));

const SheetDrawing = () => {
  const columns = steps(-112, 82, 18.98);
  const rows = steps(-17, 40, 18.9);
  return (
    <Drawing width="100%" height="100%">
      <g>
        <rect x="830" y="1" width="6" height="365" fill="#000" />
        <rect x="274" y="361" width="562" height="6" fill="#000" />
      </g>
      <g stroke="#c2c1c6" shapeRendering="crispEdges">
        {columns.map((c) => (
          <line key={c.at} x1={c.at + 0.5} x2={c.at + 0.5} y1="1" y2="100%" strokeDasharray={c.major ? undefined : "3 3"} />
        ))}
        {rows.map((r) => (
          <line key={r.at} y1={r.at + 0.5} y2={r.at + 0.5} x1="1" x2="100%" strokeDasharray={r.major ? undefined : "3 3"} />
        ))}
      </g>
      <g>
        <path d="M267.500 1v304" stroke="#000" />
        <g fill="none" stroke="#1166b4" strokeWidth="2">
          <path d="M268 361V306M264 311l4-6 4 6" />
          <path d="M268 361h56M319 357l6 4-6 4" stroke="#10489c" />
        </g>
        <circle cx="552.500" cy="210" r="42.500" fill="none" stroke="#20809e" strokeWidth="2" />
        <path d="M552.500 210V173M548 181l4.500-8 4.500 8M552 209.500h38M582 205l8 4.500-8 4.500" fill="none" stroke="#2c7890" />
        {[[508, 165], [592, 165], [508, 250], [592, 250]].map(([x, y]) => (
          <rect key={`${x}-${y}`} x={x + 0.5} y={y + 0.5} width="4" height="4" fill="#fff" stroke="#000" />
        ))}
        <circle cx="419" cy="294" r="7.500" fill="#fff" stroke="#3a90d4" strokeWidth="5" />
        <path d="M411.500 294a7.500 7.500 0 0 1 7.500-7.500" fill="none" stroke="#48b8e8" strokeWidth="5" />
      </g>
    </Drawing>
  );
};

const Timer = styled.div`
  position: absolute;
  z-index: 4;
  left: 751px;
  top: 112px;
  display: grid;
  place-items: center;
  width: 47px;
  height: 47px;
  border: 2px solid #c8f0ff;
  border-radius: 50%;
  background: radial-gradient(circle at 60% 140%, #8fdcfc 36%, transparent 37%), linear-gradient(#3c86ec, #4a9cf4);
  box-shadow: 0 1px 4px #a8c4dc;
  color: #c8f4ff;
  font-size: 14px;
`;

/* ---------- floating tool windows ---------- */

const Float = styled.section<{ $x: number; $y: number; $w: number; $glass?: boolean }>`
  position: absolute;
  z-index: 3;
  left: ${(p) => p.$x}px;
  top: ${(p) => p.$y}px;
  width: ${(p) => p.$w}px;
  border-top: 1px solid #5c5b62;
  background: #fff;
  box-shadow: 0 3px 12px rgba(0, 0, 0, 0.35);
  ${(p) => p.$glass && css`
    padding: 0 7px 8px;
    border: 1px solid #203c4c;
    background: linear-gradient(#98b6d4, #b8d4ea 60%, #b4d2e8);
    box-shadow: inset 0 0 0 1px #e8f4fc;
  `}
`;
const FloatHead = styled.header<{ $glass?: boolean }>`
  display: flex;
  align-items: center;
  height: ${(p) => (p.$glass ? 30 : 31)}px;
  padding: ${(p) => (p.$glass ? "5px 3px 0 0" : "2px 1px 0 8px")};
`;
const FloatTitle = styled.h2<{ $glass?: boolean }>`
  flex: 1;
  min-width: 0;
  margin: ${(p) => (p.$glass ? "2px 0 0" : "0 0 2px")};
  overflow: hidden;
  font-size: 12px;
  font-weight: 400;
  white-space: nowrap;
`;
const CloseButton = styled.button<{ $glass?: boolean }>`
  flex: none;
  width: ${(p) => (p.$glass ? 16 : 19)}px;
  height: ${(p) => (p.$glass ? 16 : 19)}px;
  padding: 0 0 2px;
  border: 0;
  background: #c0505a;
  color: #fff;
  font-size: 11px;
  font-weight: 700;
  line-height: 14px;
`;
const FloatBody = styled.div<{ $column?: boolean; $low?: boolean }>`
  display: flex;
  flex-direction: ${(p) => (p.$column ? "column" : "row")};
  align-items: center;
  min-height: ${(p) => (p.$low ? 30 : 33)}px;
  padding: ${(p) => (p.$column ? "0 0 2px" : p.$low ? "0" : "2px 0 0")};
  background: ${(p) =>
    p.$column
      ? "linear-gradient(90deg, #ecebf6, #cfcde8 25%, #cfcde4 75%, #b4b3c2)"
      : "linear-gradient(#fbfbfe, #dddbee 28%, #cfcde4 65%, #b0afbe)"};
  border-bottom: ${(p) => (p.$column ? "0" : "1px solid #6c6b74")};
`;

type FloatProps = {
  x: number;
  y: number;
  w: number;
  title: string;
  glass?: boolean;
  column?: boolean;
  low?: boolean;
  toolW?: number;
  tools?: ToolSpec[];
  children?: ReactNode;
};
const FloatWindow = ({ x, y, w, title, glass, column, low, toolW, tools = [], children }: FloatProps) => (
  <Float $x={x} $y={y} $w={w} $glass={glass}>
    <FloatHead $glass={glass}>
      <FloatTitle $glass={glass}>{title}</FloatTitle>
      <CloseButton $glass={glass} type="button" aria-label={`关闭 ${title}`}>x</CloseButton>
    </FloatHead>
    <FloatBody $column={column} $low={low}>
      <Grip $w={column ? 24 : low ? 14 : 12} $across={column} />
      {tools.map((t, i) => <Tool key={i} spec={t} w={toolW} />)}
      {children}
    </FloatBody>
  </Float>
);

const Field = styled.label`
  display: flex;
  align-items: center;
  font-size: 13px;
`;
const FieldName = styled.span`
  width: 27px;
  padding-left: 3px;
`;
const NumberBox = styled.span`
  display: flex;
  width: 86px;
  height: 23px;
  border: 2px solid #6c6b74;
  border-right-color: #fff;
  border-bottom-color: #fff;
  background: #f2f1f4;
`;
const NumberInput = styled.input`
  flex: 1;
  width: 0;
  padding: 0 1px;
  border: 0;
  background: none;
  color: #85848c;
  font-size: 12px;
`;
const Spinner = styled.span`
  display: grid;
  width: 20px;
  border-left: 1px solid #55545c;
`;
const SpinButton = styled.button`
  display: grid;
  place-items: center;
  padding: 0;
  border: 1px solid #fff;
  border-right-color: #55545c;
  border-bottom-color: #55545c;
  background: #ecebee;
`;
const Coordinate = ({ name, unit }: { name: string; unit: string }) => (
  <Field>
    <FieldName>{name}:</FieldName>
    <NumberBox>
      <NumberInput defaultValue={`0.000 ${unit}`} />
      <Spinner>
        <SpinButton type="button" aria-label={`${name} +`}>
          <Drawing width="6" height="4" viewBox="0 0 6 4">{line("M1 3l3-3")}</Drawing>
        </SpinButton>
        <SpinButton type="button" aria-label={`${name} -`}>
          <Drawing width="6" height="4" viewBox="0 0 6 4">{line("M0 1.500h6")}</Drawing>
        </SpinButton>
      </Spinner>
    </NumberBox>
  </Field>
);

/* ---------- status and taskbar ---------- */

const StatusBar = styled.footer`
  display: flex;
  flex: none;
  justify-content: space-between;
  height: 24px;
  background: #d0cee6;
`;
const StatusText = styled.span`
  padding-top: 4px;
  white-space: nowrap;
`;
const CommandInput = styled.input`
  width: 298px;
  height: 22px;
  margin-top: 1px;
  border: 1px solid #77767f;
  border-right: 0;
  border-radius: 0;
  background: #fff;
`;
const Taskbar = styled.footer`
  display: flex;
  flex: none;
  height: 40px;
  overflow: hidden;
  background: linear-gradient(90deg, #20343e 40%, #1c3040 65%, #1b2844 85%, #1c2c48);
`;
const SearchBox = styled.label`
  display: flex;
  align-items: center;
  flex: none;
  gap: 12px;
  width: 324px;
  background: #f2f1f2;
`;
const SearchInput = styled.input`
  flex: 1;
  padding: 0;
  border: 0;
  background: none;
  font-size: 14px;
  &::placeholder { color: #3a3a3e; opacity: 1; }
`;
const TaskItem = styled.button<{ $open?: boolean; $active?: boolean }>`
  display: flex;
  align-items: center;
  justify-content: center;
  flex: none;
  width: 49px;
  padding: 0;
  border: 0;
  background: ${(p) =>
    p.$open
      ? `linear-gradient(#7cb0dc, #7cb0dc) bottom / ${p.$active ? "100%" : "40px"} 2px no-repeat ${p.$active ? "#4a5a66" : "transparent"}`
      : "none"};
`;
const Tray = styled.div`
  display: flex;
  align-items: center;
  gap: 8px;
  margin-left: auto;
  color: #fff;
`;
const Language = styled.span`
  margin-left: 2px;
  font-size: 15px;
`;
const Clock = styled.time`
  display: flex;
  flex-direction: column;
  align-items: flex-start;
  gap: 4px;
  width: 51px;
  padding-left: 2px;
  white-space: nowrap;
  & > span:first-child { padding-left: 14px; }
`;

const TASKS: { name: string; open?: boolean; active?: boolean; art: ReactNode }[] = [
  { name: "Cortana", art: <circle cx="12" cy="12" r="7" fill="none" stroke="#fff" strokeWidth="2" /> },
  {
    name: "任务视图",
    art: <path d="M4 5v3h11V5M4 19v-3h11v3M4.500 9.500h10v5h-10zM18.500 5v3M18.500 13v6M17 10.500h3" fill="none" stroke="#fff" />,
  },
  {
    name: "Edge",
    open: true,
    art: (
      <g>
        <circle cx="12" cy="12" r="12" fill="#1878c8" />
        <path d="M1 8C4-2 20-3 24 9c1 6-4 8-8 7 2-3 0-8-5-8C6 7 2 9 1 8z" fill="#38c8a0" />
        <path d="M0 12c0-4 6-6 11-4-5 2-6 9 0 14C4 23 0 17 0 12z" fill="#2aa4e4" />
        <path d="M12 9c5 1 5 5 4 7 2 1 5 1 7-1-1 4-5 6-8 5-6-1-8-8-3-11z" fill="#20343e" />
        <path d="M9 14c0 6 6 9 12 5-4 5-9 6-13 3-1-3 0-6 1-8z" fill="#1560a8" />
      </g>
    ),
  },
  {
    name: "文件资源管理器",
    open: true,
    art: (
      <g>
        <path d="M1 3h8l2 2h12v4H1z" fill="#e8a020" />
        <rect x="1" y="7" width="22" height="14" fill="#f8d868" />
        <path d="M5 21v-8h14v8h-4v-4H9v4z" fill="#3c94c8" />
      </g>
    ),
  },
  {
    name: "Microsoft Store",
    art: (
      <g>
        <path d="M8 7V2h8v5" fill="none" stroke="#fff" strokeWidth="2" />
        <rect x="1" y="6" width="22" height="18" fill="#fff" />
        <rect x="7" y="10" width="4" height="4" fill="#e05030" />
        <rect x="13" y="10" width="4" height="4" fill="#70a828" />
        <rect x="7" y="16" width="4" height="4" fill="#2890d8" />
        <rect x="13" y="16" width="4" height="4" fill="#e8b020" />
      </g>
    ),
  },
  {
    name: "截图工具",
    art: (
      <g>
        <path d="M5 2c8-4 17 1 16 8 0 4-3 6-7 7 4-4 4-9 0-10-4-2-8 0-9 4-2-3-2-6 0-9z" fill="#b8402c" />
        <path d="M12 2l1 15M7 9l8 9" stroke="#e4ecf0" strokeWidth="2" />
        <circle cx="5" cy="18" r="3" fill="none" stroke="#3c98d8" strokeWidth="2" />
        <circle cx="14" cy="20" r="3" fill="none" stroke="#3c98d8" strokeWidth="2" />
      </g>
    ),
  },
  {
    name: "控制面板",
    art: (
      <g>
        <rect x="2" y="5" width="20" height="14" fill="#7cc8f0" />
        <circle cx="8" cy="11" r="3" fill="#fff" stroke="#2468a8" />
        <path d="M14 8h6M14 11h6M14 14h6M5 16h6" stroke="#2468a8" />
      </g>
    ),
  },
  {
    name: "百度网盘",
    open: true,
    art: (
      <g>
        <rect width="24" height="24" rx="4" fill="#fff" />
        <g fill="none" strokeWidth="2">
          <circle cx="12" cy="8" r="3.500" stroke="#e0506c" />
          <circle cx="7.500" cy="14" r="3.500" stroke="#2c80d8" />
          <circle cx="16.500" cy="14" r="3.500" stroke="#40a8c0" />
        </g>
      </g>
    ),
  },
  {
    name: "CATIA",
    open: true,
    active: true,
    art: (
      <g>
        <rect x="1" y="1" width="22" height="22" fill="#0c0c10" stroke="#fff" />
        <path d="M2 2l6 2 6 6 1 6-4 6-3-8z" fill="#2c6ca8" />
        <path d="M2 2l7 4 4 6-2 4-3-6z" fill="#cfe6f4" />
        <path d="M13 6c4-2 8 2 8 6-2 5-6 6-9 3 3-2 3-5 1-9z" fill="#c8682c" />
        <path d="M16 8l3 4-3 3" fill="none" stroke="#f4c890" />
      </g>
    ),
  },
];

const BOTTOM_TOOLS: ToolSpec[] = [
  "save", "print", "cut", "copy", "paste",
  { icon: "undo", caret: true },
  { icon: "redo", w: 30, caret: true },
  { icon: "help", w: 30 },
  { grip: 18 }, "fit", "pan", "zoomin", "zoomout", "viewA", "viewB",
  { grip: 20 }, "swirl",
  { grip: 20 }, "ogrid",
  "|", { icon: "dimcheck", w: 31 }, { icon: "ocheck", w: 33 },
  "|", { icon: "dimcursor", w: 34 },
  "|", { icon: "traffic", w: 34, caret: true },
  { grip: 20 }, "ogrid2",
  "|", { icon: "odim", w: 36 }, "owin", "wand",
  "|", { icon: "odimzoom", w: 36 },
  { grip: 12 }, "ruler", { icon: "caliper", w: 30 },
  { grip: 18 }, "book",
  { grip: 18 }, "plug", { icon: "knowA", w: 30 }, "knowB",
  { grip: 20 },
];

export default function App() {
  return (
    <Shell>
      <GlobalStyle />
      <TitleBar>
        <TitleText>V5 - [Drawing1]</TitleText>
        <WindowButtons>
          <WindowButton type="button" aria-label="最小化" $w={40}>
            <Drawing width="11" height="10" viewBox="0 0 11 10">{line("M0 4.500h10")}</Drawing>
          </WindowButton>
          <WindowButton type="button" aria-label="还原" $w={29}>
            <Drawing width="11" height="11" viewBox="0 0 11 11">{line("M0.500 2.500h7v8h-7zM2.500 2v-1.500h8v8h-2")}</Drawing>
          </WindowButton>
        </WindowButtons>
      </TitleBar>
      <MenuBar>
        <MenuButton type="button" $lead>ENOVIA V5 VPM</MenuButton>
        {["文件", "编辑", "视图", "插入", "工具", "窗口", "帮助"].map((m) => (
          <MenuButton key={m} type="button">{m}</MenuButton>
        ))}
      </MenuBar>
      <UploadPill type="button">
        <PillLogo><CloudRings /></PillLogo>
        拖拽上传
      </UploadPill>

      <ToolStrip $h={40} $pad={3}>
        <Combo label="样式" w={38} ml={0} />
        <Space $w={8} />
        <Grip />
        <ToolButton type="button" aria-label="公差">
          <Icon name="grayTolerance" />
          <Caret $boxed />
        </ToolButton>
        <Divider />
        <Combo label="公差说明" w={115} ml={7} pad={10} value="(无公差)" muted />
        <Combo label="数字说明" w={68} ml={1} muted />
        <Space $w={3} />
        <Grip />
        <Combo label="线颜色" w={69} ml={0} />
        <Combo label="线宽" w={69} />
        <Combo label="线型" w={69} />
        <ComboBox $w={43} $ml={3}>
          <PointSelect aria-label="点型" disabled $muted $pad={6}><option>▪</option></PointSelect>
          <Drawing width="9" height="6" viewBox="0 0 9 6">{line("M0.500 0.500l4 4 4-4", "#b0afb8")}</Drawing>
        </ComboBox>
        <Combo label="图层" w={69} value="无" />
        <ToolButton type="button" aria-label="复制格式"><Icon name="brush" /></ToolButton>
        <ToolButton type="button" aria-label="阵列"><Icon name="hatchTile" /></ToolButton>
        <Space $w={19} />
        <Grip />
        <Combo label="字体" w={103} ml={0} pad={4} value="SICH" flat />
        <Combo label="字号" w={55} value="3.5" muted />
        <Space $w={1} />
        <Divider />
        <Space $w={4} />
        <ToolButton type="button" $gray>B</ToolButton>
        <ToolButton type="button" $gray><Emphasis $kind="i">I</Emphasis></ToolButton>
        <ToolButton type="button" $gray><Emphasis $kind="u">S</Emphasis><Caret $boxed /></ToolButton>
        <ToolButton type="button" $gray $w={32}><Emphasis $kind="s">S</Emphasis></ToolButton>
        <ToolButton type="button" $gray>×<Power>2</Power><Caret $boxed /></ToolButton>
        <Divider />
        <Space $w={6} />
        <ToolButton type="button" aria-label="对齐"><Icon name="grayAlign" /><Caret $boxed /></ToolButton>
        <ToolButton type="button" $gray $w={30}><Emphasis $kind="n">A</Emphasis><Caret $boxed /></ToolButton>
        <ToolButton type="button" aria-label="文本框" $w={30}><Icon name="grayFrame" /><Caret $boxed /></ToolButton>
        <Divider />
        <Space $w={9} />
        <ToolButton type="button" aria-label="插入符号"><Icon name="graySymbol" /><Caret $boxed /></ToolButton>
        <Grip />
        <ToolButton type="button" aria-label="点对齐" $w={32}><Icon name="snapGrid" /></ToolButton>
      </ToolStrip>

      <Main>
        <TreePane>
          <Tree>
            <TreeRow><TreeLabel $on>wing1</TreeLabel></TreeRow>
            <TreeRow><TreeLabel>页.1</TreeLabel></TreeRow>
            <TreeRow><TreeLabel $on>页.2</TreeLabel></TreeRow>
            <TreeRow><TreeLabel>页.3 (细节)</TreeLabel></TreeRow>
            <TreeRow><Icon name="treeDetail" /><TreeLabel $line>2D 部件.1</TreeLabel></TreeRow>
            <TreeRow><Icon name="treeDetail" /><TreeLabel>2D 部件.2</TreeLabel></TreeRow>
          </Tree>
          <ScrollTrack>
            <Drawing width="9" height="7" viewBox="0 0 9 7">{line("M0.500 5.500l4-4 4 4", "#444", 2)}</Drawing>
          </ScrollTrack>
          <ScrollBottom>
            <Drawing width="7" height="9" viewBox="0 0 7 9">{line("M1.500 0.500l4 4-4 4", "#444", 2)}</Drawing>
          </ScrollBottom>
        </TreePane>
        <Splitter />
        <Work>
          <Tabs role="tablist">
            <Tab role="tab" $w={40}>页.1</Tab>
            <Tab role="tab" $w={47} $dark>页.2</Tab>
            <Tab role="tab" $w={78} $dark>页.3 (细节)</Tab>
          </Tabs>
          <Sheet><SheetDrawing /></Sheet>
          <SheetFoot />
        </Work>
      </Main>

      <ToolStrip $h={37} $pad={1}>
        <Space $w={3} />
        {BOTTOM_TOOLS.map((t, i) => <Tool key={i} spec={t} />)}
        <ComboBox $w={92} $ml={0}>
          <GrayCombo aria-label="过滤器" disabled><option /></GrayCombo>
          <Drawing width="9" height="6" viewBox="0 0 9 6">{line("M0.500 0.500l4 4 4-4", "#a09fa8")}</Drawing>
        </ComboBox>
        <Combo label="级别" w={56} muted />
      </ToolStrip>
      <StatusBar>
        <StatusText>实例)/Main View/ViewMakeUp.1 选定</StatusText>
        <CommandInput aria-label="命令" />
      </StatusBar>
      <Taskbar>
        <SearchBox>
          <Drawing width="8" height="14" viewBox="0 0 8 14">
            <circle cx="2" cy="6" r="5" fill="none" stroke="#222" strokeWidth="1.500" />
          </Drawing>
          <SearchInput placeholder="在这里输入你要搜索的内容" aria-label="搜索" />
        </SearchBox>
        {TASKS.map((t) => (
          <TaskItem key={t.name} type="button" aria-label={t.name} $open={t.open} $active={t.active}>
            <Drawing width="24" height="24" viewBox="0 0 24 24">{t.art}</Drawing>
          </TaskItem>
        ))}
        <Tray>
          <Drawing width="13" height="8" viewBox="0 0 13 8">{line("M1 7l5.500-5.500L12 7", "#fff")}</Drawing>
          <Drawing width="18" height="14" viewBox="0 0 18 14">
            {line("M5.500 4.500h10v7h-6M16.500 6v4M1.500 1v3M4.500 1v3M0.500 4.500h5v3h-5zM3 8v4h4", "#fff")}
            <rect x="7" y="6" width="7" height="4" fill="#fff" />
          </Drawing>
          <Drawing width="15" height="15" viewBox="0 0 15 15">
            {line("M1 14C1 7 6 2 14 2M4 14c0-5 4-9 10-9M7 14c0-4 3-6 7-6M10 14c0-2 2-3 4-3", "#dde4ec")}
            <circle cx="12" cy="13" r="1.500" fill="#fff" />
          </Drawing>
          <Drawing width="16" height="14" viewBox="0 0 16 14">
            {line("M0.500 4.500h3l4-4v12l-4-4h-3zM10 5l5 5M15 5l-5 5", "#fff")}
          </Drawing>
          <Language>英</Language>
          <Clock>
            <span>19:53</span>
            <span>2021/5/3</span>
          </Clock>
        </Tray>
      </Taskbar>

      <Timer>01:12</Timer>

      <FloatWindow x={265} y={153} w={102} title="工程图" toolW={29}
        tools={[{ icon: "frame", caret: true }, "sheet", "detail"]} />
      <FloatWindow x={1110} y={129} w={71} title="分析" tools={["scope", "analysis"]} />
      <FloatWindow x={1082} y={199} w={36} title="修" column
        tools={[{ icon: "target", caret: true }, { icon: "bucket", caret: true }, "arrows"]} />
      <FloatWindow x={1129} y={200} w={36} title="视" column
        tools={[
          { icon: "projview", caret: true }, { icon: "hatchA", caret: true }, { icon: "grayGlass", caret: true },
          { icon: "grayBreak", caret: true }, { icon: "grayCut", caret: true }, "-", { icon: "handSheet", h: 36, caret: true },
        ]} />
      <FloatWindow x={1183} y={198} w={35} title="T" column tools={["textTarget"]} />
      <FloatWindow x={1202} y={285} w={36} title="多" column tools={["nested", "axes"]} />
      <FloatWindow x={155} y={462} w={227} title="投影" glass
        tools={["projview", "section", "dashed", "grayProj", "grayAux", "iso", "projplus"]} />
      <FloatWindow x={7} y={593} w={356} title="位置和方向" low>
        <Coordinate name="X" unit="mm" />
        <Coordinate name="Y" unit="mm" />
        <Coordinate name="A" unit="deg" />
      </FloatWindow>
      <FloatWindow x={1014} y={407} w={115} title="尺寸生成" glass tools={["grayDimA", "grayDimB", "grayAB"]} />
      <FloatWindow x={1081} y={483} w={143} title="尺寸标注" toolW={30}
        tools={[
          { icon: "dimension", caret: true }, { icon: "dimensionGear", caret: true },
          { icon: "dimensionCurve", caret: true }, "|", { icon: "datum", w: 36, caret: true },
        ]} />
      <FloatWindow x={638} y={597} w={115} title="符号" glass tools={["roughness", "weld", "areaFill"]} />
      <FloatWindow x={757} y={595} w={143} title="截面" glass tools={["hatchA", "hatchB", "hatchC", "hatchB"]} />
      <FloatWindow x={928} y={587} w={199} title="文本" glass
        tools={["textT", "textLeader", "textReplicate", "balloon", "datumTarget", "textLink"]} />
      <FloatWindow x={1132} y={577} w={87} title="表" glass tools={["table", "tableCsv"]} />
    </Shell>
  );
}
